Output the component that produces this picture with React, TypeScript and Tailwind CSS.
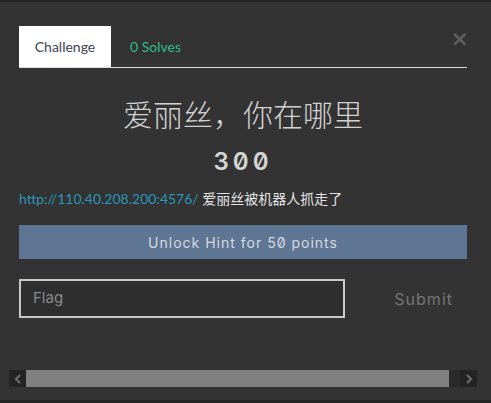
import React from "react";

const LATO = "font-['Lato','Liberation_Sans',sans-serif]";
const TECH = "font-['Inter','DejaVu_Sans',sans-serif]";

const Tabs: React.FC = () => (
  <div className="flex items-stretch border-b border-[#dcdcdc]">
    <div className={`flex h-[41px] w-[92px] items-center justify-center bg-white text-[14px] text-[#3c4552] ${LATO}`}>
      Challenge
    </div>
    <div className={`flex items-center pl-[19px] text-[14px] text-[#2ebd8b] ${LATO}`}>0 Solves</div>
    <div className="ml-auto mt-[2px] -mr-[2px] text-[22px] font-bold leading-none text-[#5f5f5f] font-['DejaVu_Sans',sans-serif]">
      ×
    </div>
  </div>
);

const Scrollbar: React.FC = () => (
  <div className="ml-[9px] mr-[14px] flex h-[17px]">
    <div className="flex w-[17px] items-center justify-center bg-[#242424]">
      <svg width="8" height="10" viewBox="0 0 8 10">
        <path d="M6 1 L2 5 L6 9" stroke="#6b6b6b" strokeWidth="2.2" fill="none" />
      </svg>
    </div>
    <div className="flex-1 bg-[#808080]" />
    <div className="w-[11px] bg-[#2a2a2a]" />
    <div className="flex w-[17px] items-center justify-center bg-[#242424]">
      <svg width="8" height="10" viewBox="0 0 8 10">
        <path d="M2 1 L6 5 L2 9" stroke="#6b6b6b" strokeWidth="2.2" fill="none" />
      </svg>
    </div>
  </div>
);

export default function App() {
  return (
    <div className="flex h-[403px] w-[491px] flex-col border-t-2 border-b-[3px] border-t-[#242424] border-b-[#262626] bg-[#333333]">
      <div className="pl-[19px] pr-[24px] pt-[24px]">
        <Tabs />
        <h1 className="mt-[27px] text-center text-[30px] leading-[36px] text-[#d2d2d2] font-['Noto_Sans_CJK_SC',sans-serif] font-light">
          爱丽丝，你在哪里
        </h1>
        <div className={`mt-[17px] text-center text-[24px] font-semibold leading-[28px] tracking-[4px] text-[#d4d4d4] slashed-zero ${TECH}`}>
          300
        </div>
        <p className={`mt-[12px] text-[14px] leading-[20px] ${LATO}`}>
          <span className="text-[#2a97b8]">http://110.40.208.200:4576/</span>{" "}
          <span className="text-[#e4e4e4] font-['Noto_Sans_CJK_SC',sans-serif]">爱丽丝被机器人抓走了</span>
        </p>
        <div className={`mt-[16px] flex h-[34px] items-center justify-center bg-[#5e7594] text-[14px] tracking-[1px] text-[#d6d9de] slashed-zero ${TECH}`}>
          Unlock Hint for 50 points
        </div>
        <div className="mt-[20px] flex items-center">
          <div className={`flex h-[39px] w-[326px] items-center border-2 border-[#c8c8c8] bg-[#2e2e2e] pl-[12px] text-[15px] text-[#8a8a8a] ${TECH}`}>
            Flag
          </div>
          <div className={`ml-auto mr-[14px] text-[16px] tracking-[1px] text-[#747474] ${TECH}`}>Submit</div>
        </div>
      </div>
      <div className="mt-auto mb-[13px]">
        <Scrollbar />
      </div>
    </div>
  );
}
